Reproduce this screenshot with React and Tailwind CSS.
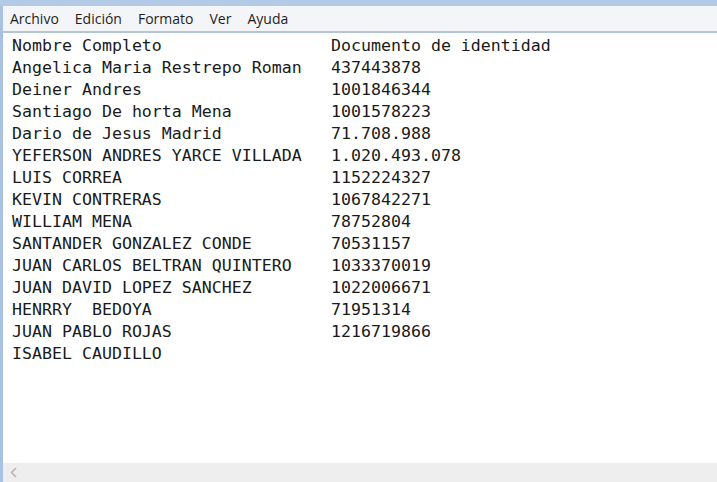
import React from 'react';

const rows = [
  ['Nombre Completo', 'Documento de identidad'],
  ['Angelica Maria Restrepo Roman', '437443878'],
  ['Deiner Andres', '1001846344'],
  ['Santiago De horta Mena', '1001578223'],
  ['Dario de Jesus Madrid', '71.708.988'],
  ['YEFERSON ANDRES YARCE VILLADA', '1.020.493.078'],
  ['LUIS CORREA', '1152224327'],
  ['KEVIN CONTRERAS', '1067842271'],
  ['WILLIAM MENA', '78752804'],
  ['SANTANDER GONZALEZ CONDE', '70531157'],
  ['JUAN CARLOS BELTRAN QUINTERO', '1033370019'],
  ['JUAN DAVID LOPEZ SANCHEZ', '1022006671'],
  ['HENRRY  BEDOYA', '71951314'],
  ['JUAN PABLO ROJAS', '1216719866'],
  ['ISABEL CAUDILLO', ''],
];

const menu = ['Archivo', 'Edición', 'Formato', 'Ver', 'Ayuda'];

export default function App() {
  return (
    <div className="w-[717px] h-[482px] flex flex-col bg-white overflow-hidden">
      <div className="h-[6px] bg-[#b3cbe6] shrink-0" />
      <div className="flex flex-1 min-h-0">
        <div className="w-[3px] bg-[#a9c2e2] shrink-0" />
        <div className="flex-1 flex flex-col min-w-0">
          <div className="h-[25px] bg-[#f3f5f9] flex items-center gap-[16px] pl-[7px] text-[14px] text-[#1e1e1e] shrink-0" style={{ fontFamily: '"Open Sans", "Noto Sans", sans-serif' }}>
            {menu.map(m => <span key={m}>{m}</span>)}
          </div>
          <div className="h-[2px] bg-[#b2c4d6] shrink-0" />
          <div className="flex-1 pt-[2px] pl-[9px] text-[16.6px] leading-[22px] text-[#1a1a1a] whitespace-pre" style={{ fontFamily: '"DejaVu Sans Mono", "Liberation Mono", monospace' }}>
            {rows.map(([n, d], i) => (
              <div key={i} className="flex">
                <span className="w-[319px] shrink-0">{n}</span>
                <span>{d}</span>
              </div>
            ))}
          </div>
          <div className="h-[19px] bg-[#eeeeee] flex items-center pl-[6px] shrink-0">
            <svg width="9" height="11" viewBox="0 0 9 11"><path d="M7 1 L2.5 5.5 L7 10" fill="none" stroke="#b5b5b5" strokeWidth="1.6" /></svg>
          </div>
        </div>
      </div>
    </div>
  );
}
